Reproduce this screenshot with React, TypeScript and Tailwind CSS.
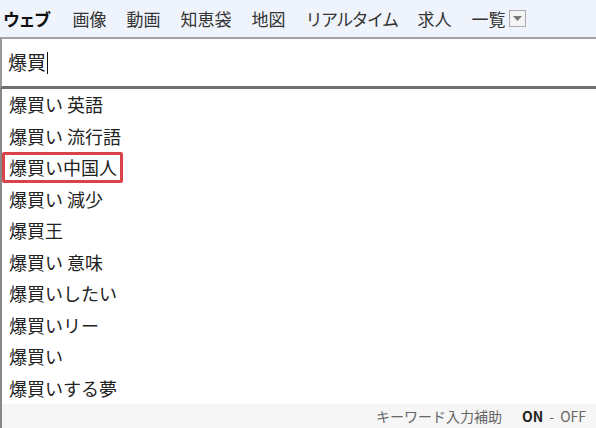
import React from 'react';

const navItems = [
  { label: '画像', cls: '' },
  { label: '動画', cls: '' },
  { label: '知恵袋', cls: '' },
  { label: '地図', cls: '' },
  { label: 'リアルタイム', cls: 'tracking-[-1.6px]' },
  { label: '求人', cls: '' },
];

const suggestions = [
  '爆買い 英語',
  '爆買い 流行語',
  '爆買い中国人',
  '爆買い 減少',
  '爆買王',
  '爆買い 意味',
  '爆買いしたい',
  '爆買いリー',
  '爆買い',
  '爆買いする夢',
];

const font = { fontFamily: '"Noto Sans CJK JP", "Noto Sans", sans-serif' };

const App: React.FC = () => {
  return (
    <div className="w-[596px] h-[428px] bg-white overflow-hidden text-[#222]" style={font}>
      {/* Search tabs */}
      <div className="h-[37px] bg-[#eff3fb] flex items-center pl-[3px] gap-[20px] text-[17px] text-[#333]">
        <span className="font-bold text-[#111] tracking-[-1.5px] mr-[3px]">ウェブ</span>
        {navItems.map((item) => (
          <span key={item.label} className={item.cls}>
            {item.label}
          </span>
        ))}
        <span className="flex items-center gap-[4px]">
          一覧
          <span className="w-[17px] h-[17px] border border-[#aaa] bg-[#f4f4f4] flex items-center justify-center">
            <svg width="11" height="7" viewBox="0 0 11 7">
              <path d="M1 1 L10 1 L5.5 6 Z" fill="#777" />
            </svg>
          </span>
        </span>
      </div>

      {/* Input */}
      <div className="h-[52px] border-t-2 border-t-[#a3a3a3] border-b-[3px] border-b-[#707070] border-l-2 border-l-[#999] flex items-center pl-[6px] text-[19px]">
        <span>爆買</span>
        <span className="w-px h-[22px] bg-[#111] ml-px" />
      </div>

      {/* Suggestions */}
      <div className="border-l-2 border-l-[#888]">
        {suggestions.map((s, i) => (
          <div key={s + i} className="h-[31.5px] flex items-center pl-[7px] text-[18px]">
            {i === 2 ? (
              <span className="border-[3px] border-[#d9434a] rounded-[2px] -ml-[7px] pl-[4px] pr-[3px] h-[31px] flex items-center">
                {s}
              </span>
            ) : (
              s
            )}
          </div>
        ))}
        <div className="h-[24px] bg-[#f6f6f6] flex items-center justify-end pr-[10px] text-[14px] text-[#666]">
          <span>キーワード入力補助</span>
          <span className="ml-[20px] font-bold text-[#222]">ON</span>
          <span className="mx-[6px]">-</span>
          <span>OFF</span>
        </div>
      </div>
    </div>
  );
};

export default App;
